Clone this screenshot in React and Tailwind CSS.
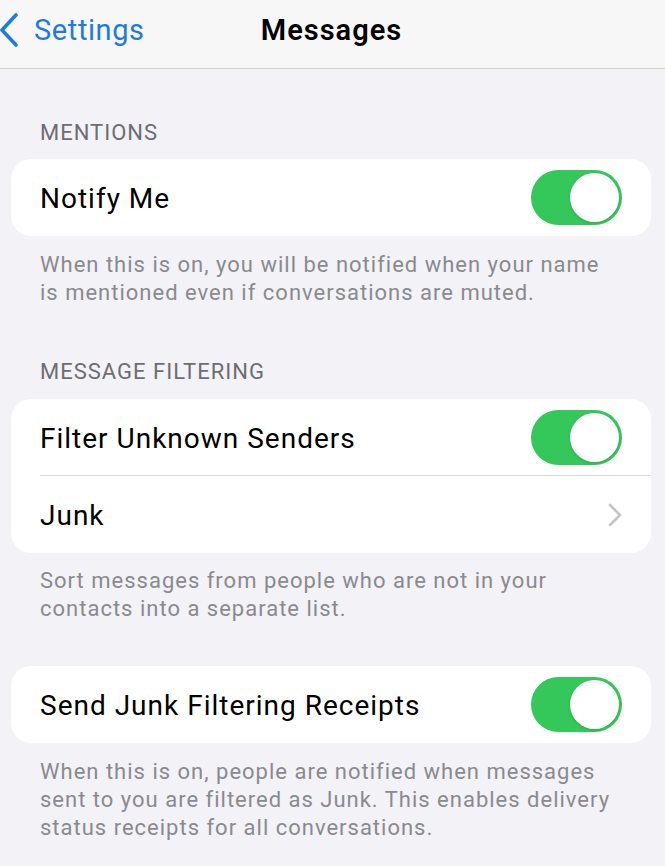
import React from "react";

function Toggle() {
  return (
    <div className="w-[91px] h-[55px] rounded-full bg-[#34c759] flex items-center justify-end p-[3px] shrink-0">
      <div className="w-[49px] h-[49px] rounded-full bg-white shadow-[0_1px_3px_rgba(0,0,0,0.15)]" />
    </div>
  );
}

function Row({ label, right, border }) {
  return (
    <div className="h-[77px] flex items-center pl-[29px] pr-[29px] relative">
      <span className="text-[28px] tracking-[1px] text-black leading-none pt-[3px]">{label}</span>
      <div className="ml-auto flex items-center">{right}</div>
      {border && <div className="absolute left-[29px] right-0 bottom-0 h-px bg-[#d9d9dc]" />}
    </div>
  );
}

function Chevron() {
  return (
    <svg width="16" height="24" viewBox="0 0 16 24" fill="none" className="mr-[-1px]">
      <path d="M3 2 L13 12 L3 22" stroke="#c4c4c7" strokeWidth="2.6" strokeLinecap="round" strokeLinejoin="round" />
    </svg>
  );
}

function Footer({ children, className = "" }) {
  return (
    <div className={"pl-[40px] pr-[50px] text-[22px] tracking-[1px] leading-[28px] text-[#8a8a8e] " + className}>
      {children}
    </div>
  );
}

export default function App() {
  return (
    <div className="w-[665px] h-[866px] bg-[#f2f2f7] overflow-hidden" style={{ fontFamily: "Roboto, 'Liberation Sans', sans-serif" }}>
      <div className="h-[69px] bg-[#f7f7f8] border-b border-[#cfcfd2] relative flex items-center">
        <div className="flex items-center h-full pb-[8px]">
          <svg width="20" height="34" viewBox="0 0 20 34" fill="none" className="ml-[-1px]">
            <path d="M17 2 L3 17 L17 32" stroke="#1f7ae0" strokeWidth="3.6" strokeLinecap="round" strokeLinejoin="round" />
          </svg>
          <span className="ml-[15px] text-[29px] tracking-[0.6px] text-[#1f7ae0] leading-none">Settings</span>
        </div>
        <div className="absolute left-0 right-0 top-0 h-full flex items-center justify-center pb-[8px] pointer-events-none">
          <span className="text-[29px] tracking-[1px] font-semibold text-black leading-none ml-[-2px]">Messages</span>
        </div>
      </div>

      <div className="pt-[50px] pl-[40px] text-[22px] tracking-[1px] leading-[28px] text-[#6d6d72] uppercase">Mentions</div>
      <div className="mt-[12px] ml-[11px] mr-[14px] bg-white rounded-[20px]">
        <Row label="Notify Me" right={<Toggle />} />
      </div>
      <Footer className="mt-[15px]">
        When this is on, you will be notified when your name is mentioned even if conversations are muted.
      </Footer>

      <div className="pt-[51px] pl-[40px] text-[22px] tracking-[1px] leading-[28px] text-[#6d6d72] uppercase">Message Filtering</div>
      <div className="mt-[13px] ml-[11px] mr-[14px] bg-white rounded-[20px]">
        <Row label="Filter Unknown Senders" right={<Toggle />} border />
        <Row label="Junk" right={<Chevron />} />
      </div>
      <Footer className="mt-[14px]">
        Sort messages from people who are not in your contacts into a separate list.
      </Footer>

      <div className="mt-[43px] ml-[11px] mr-[14px] bg-white rounded-[20px]">
        <Row label="Send Junk Filtering Receipts" right={<Toggle />} />
      </div>
      <Footer className="mt-[15px]">
        When this is on, people are notified when messages sent to you are filtered as Junk. This enables delivery status receipts for all conversations.
      </Footer>
    </div>
  );
}
